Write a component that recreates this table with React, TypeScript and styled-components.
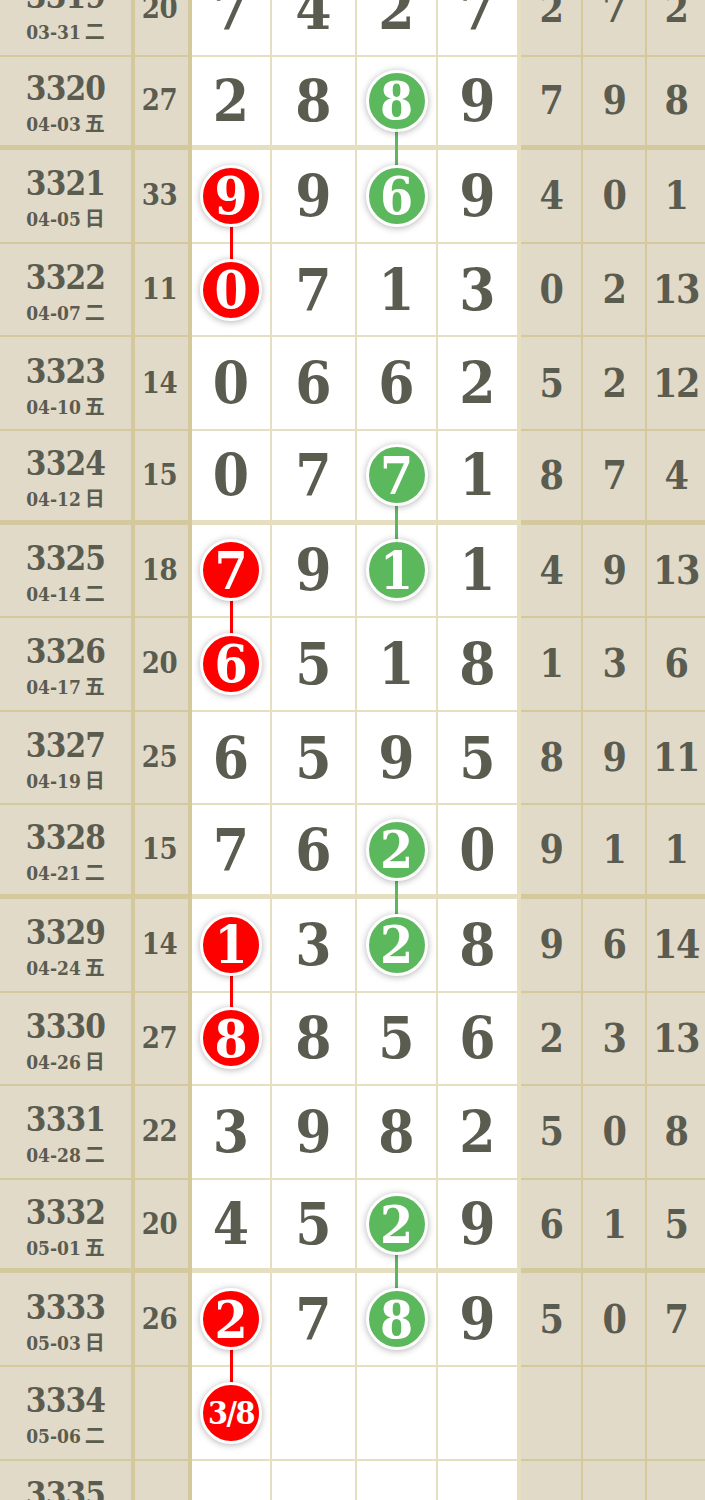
import React from "react";
import styled, { createGlobalStyle } from "styled-components";

const LINE = "rgba(188, 172, 88, 0.38)";
const BEIGE = "#e2dac9";
const INK = "#5a5c50";
const SERIF = `"DejaVu Serif Condensed", "DejaVu Serif", "Noto Sans CJK SC", serif`;

const GlobalStyle = createGlobalStyle`
  html, body {
    margin: 0;
    padding: 0;
    background: ${BEIGE};
  }
  body {
    font-family: ${SERIF};
    color: ${INK};
  }
`;

const Board = styled.div`
  display: flex;
  flex-direction: column;
  margin-top: -37px;
  width: 705px;
  overflow: hidden;
`;

const Row = styled.div`
  display: grid;
  grid-template-columns: 135px 57px 80px 85px 81px 83px 62px 64px 58px;
  height: 93.6px;
`;

type CellProps = { $white?: boolean; $right: number; $bottom: number };

const Cell = styled.div<CellProps>`
  position: relative;
  box-sizing: border-box;
  display: flex;
  align-items: center;
  justify-content: center;
  background: ${(p) => (p.$white ? "#ffffff" : BEIGE)};
  border-right: ${(p) => p.$right}px solid ${LINE};
  border-bottom: ${(p) => p.$bottom}px solid ${LINE};
`;

const PeriodBox = styled.div`
  display: flex;
  flex-direction: column;
  align-items: center;
  padding-top: 5px;
`;

const PeriodNum = styled.div`
  font-family: ${SERIF};
  font-weight: bold;
  font-size: 33px;
  line-height: 1;
  letter-spacing: -0.8px;
`;

const DateText = styled.div`
  font-family: ${SERIF};
  font-weight: bold;
  font-size: 19px;
  line-height: 1;
  margin-top: 8px;
  white-space: nowrap;
`;

const Weekday = styled.span`
  font-family: "Noto Sans CJK SC", sans-serif;
  font-weight: bold;
  font-size: 20px;
  margin-left: 4px;
`;

const SumNum = styled.div`
  font-family: ${SERIF};
  font-weight: bold;
  font-size: 29px;
  line-height: 1;
  padding-right: 4px;
  letter-spacing: -0.5px;
`;

const BigNum = styled.div`
  font-family: ${SERIF};
  font-weight: bold;
  font-size: 58px;
  line-height: 1;
`;

const SideNum = styled.div`
  font-family: ${SERIF};
  font-weight: bold;
  font-size: 39px;
  line-height: 1;
  letter-spacing: -1.5px;
`;

const Ball = styled.div<{ $color: string; $small?: boolean }>`
  position: relative;
  z-index: 2;
  box-sizing: border-box;
  width: 62px;
  height: 62px;
  border-radius: 50%;
  border: 3px solid #ffffff;
  background: ${(p) => p.$color};
  box-shadow: 0 1px 7px rgba(0, 0, 0, 0.3);
  display: flex;
  align-items: center;
  justify-content: center;
  color: #ffffff;
  font-family: ${SERIF};
  font-weight: bold;
  font-size: ${(p) => (p.$small ? "32px" : "53px")};
  line-height: 1;
  letter-spacing: ${(p) => (p.$small ? "-1.5px" : "0")};
`;

const Connector = styled.div<{ $color: string }>`
  position: absolute;
  z-index: 1;
  left: 50%;
  top: 50%;
  width: 3px;
  margin-left: -1.5px;
  height: 93.6px;
  background: ${(p) => p.$color};
`;

const RED = "#ff0000";
const GREEN = "#5cb85c";

type Mark = "r" | "g" | null;

type RowData = {
  period: string;
  date: string;
  wd: string;
  sum: string;
  digits: string[];
  marks: Mark[];
  side: string[];
};

const rows: RowData[] = [
  { period: "3319", date: "03-31", wd: "二", sum: "20", digits: ["7", "4", "2", "7"], marks: [null, null, null, null], side: ["2", "7", "2"] },
  { period: "3320", date: "04-03", wd: "五", sum: "27", digits: ["2", "8", "8", "9"], marks: [null, null, "g", null], side: ["7", "9", "8"] },
  { period: "3321", date: "04-05", wd: "日", sum: "33", digits: ["9", "9", "6", "9"], marks: ["r", null, "g", null], side: ["4", "0", "1"] },
  { period: "3322", date: "04-07", wd: "二", sum: "11", digits: ["0", "7", "1", "3"], marks: ["r", null, null, null], side: ["0", "2", "13"] },
  { period: "3323", date: "04-10", wd: "五", sum: "14", digits: ["0", "6", "6", "2"], marks: [null, null, null, null], side: ["5", "2", "12"] },
  { period: "3324", date: "04-12", wd: "日", sum: "15", digits: ["0", "7", "7", "1"], marks: [null, null, "g", null], side: ["8", "7", "4"] },
  { period: "3325", date: "04-14", wd: "二", sum: "18", digits: ["7", "9", "1", "1"], marks: ["r", null, "g", null], side: ["4", "9", "13"] },
  { period: "3326", date: "04-17", wd: "五", sum: "20", digits: ["6", "5", "1", "8"], marks: ["r", null, null, null], side: ["1", "3", "6"] },
  { period: "3327", date: "04-19", wd: "日", sum: "25", digits: ["6", "5", "9", "5"], marks: [null, null, null, null], side: ["8", "9", "11"] },
  { period: "3328", date: "04-21", wd: "二", sum: "15", digits: ["7", "6", "2", "0"], marks: [null, null, "g", null], side: ["9", "1", "1"] },
  { period: "3329", date: "04-24", wd: "五", sum: "14", digits: ["1", "3", "2", "8"], marks: ["r", null, "g", null], side: ["9", "6", "14"] },
  { period: "3330", date: "04-26", wd: "日", sum: "27", digits: ["8", "8", "5", "6"], marks: ["r", null, null, null], side: ["2", "3", "13"] },
  { period: "3331", date: "04-28", wd: "二", sum: "22", digits: ["3", "9", "8", "2"], marks: [null, null, null, null], side: ["5", "0", "8"] },
  { period: "3332", date: "05-01", wd: "五", sum: "20", digits: ["4", "5", "2", "9"], marks: [null, null, "g", null], side: ["6", "1", "5"] },
  { period: "3333", date: "05-03", wd: "日", sum: "26", digits: ["2", "7", "8", "9"], marks: ["r", null, "g", null], side: ["5", "0", "7"] },
  { period: "3334", date: "05-06", wd: "二", sum: "", digits: ["3/8", "", "", ""], marks: ["r", null, null, null], side: ["", "", ""] },
  { period: "3335", date: "05-08", wd: "四", sum: "", digits: ["", "", "", ""], marks: [null, null, null, null], side: ["", "", ""] },
];

const digitRight = [2, 2, 2, 4];
const sideRight = [2, 2, 0];

export default function App() {
  return (
    <>
      <GlobalStyle />
      <Board>
        {rows.map((r, ri) => {
          const thick = (parseInt(r.period, 10) - 3320) % 4 === 0;
          const bottom = thick ? 5 : 2;
          const next = rows[ri + 1];
          return (
            <Row key={r.period}>
              <Cell $right={4} $bottom={bottom}>
                <PeriodBox>
                  <PeriodNum>{r.period}</PeriodNum>
                  <DateText>
                    {r.date}
                    <Weekday>{r.wd}</Weekday>
                  </DateText>
                </PeriodBox>
              </Cell>
              <Cell $right={4} $bottom={bottom}>
                <SumNum>{r.sum}</SumNum>
              </Cell>
              {r.digits.map((d, di) => {
                const m = r.marks[di];
                const color = m === "r" ? RED : GREEN;
                const linked = m && next && next.marks[di] === m;
                return (
                  <Cell key={di} $white $right={digitRight[di]} $bottom={bottom}>
                    {m ? (
                      <>
                        {linked && <Connector $color={color} />}
                        <Ball $color={color} $small={d.length > 1}>
                          {d}
                        </Ball>
                      </>
                    ) : (
                      <BigNum>{d}</BigNum>
                    )}
                  </Cell>
                );
              })}
              {r.side.map((s, si) => (
                <Cell key={`s${si}`} $right={sideRight[si]} $bottom={bottom}>
                  <SideNum>{s}</SideNum>
                </Cell>
              ))}
            </Row>
          );
        })}
      </Board>
    </>
  );
}
